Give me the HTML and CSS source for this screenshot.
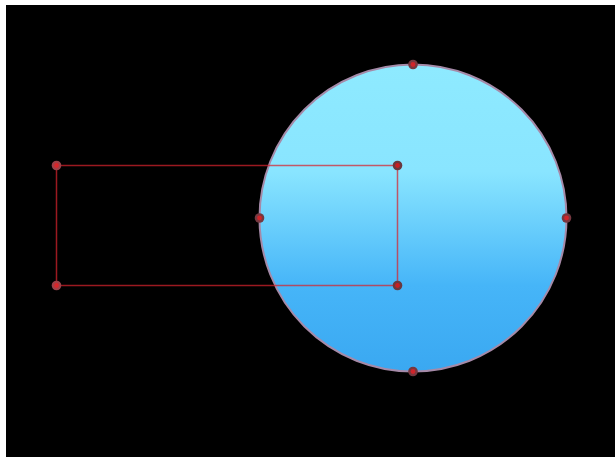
FILE: index.html
```html
<!DOCTYPE html>
<html>
<head>
<meta charset="utf-8">
<link rel="stylesheet" href="styles.css">
</head>
<body>
<div class="stage">
  <svg class="canvas" viewBox="0 0 609 452" width="609" height="452">
    <defs>
      <linearGradient id="fill" x1="0" y1="0" x2="0" y2="1">
        <stop offset="0" stop-color="#8eeaff"/>
        <stop offset="0.35" stop-color="#89e5ff"/>
        <stop offset="0.72" stop-color="#46b5f8"/>
        <stop offset="1" stop-color="#3aa8f1"/>
      </linearGradient>
    </defs>
    <circle cx="407" cy="213" r="153.5" fill="url(#fill)" stroke="#a58aa8" stroke-width="2"/>
    <rect x="50.5" y="160.5" width="341" height="120" fill="none" stroke="rgba(215,35,45,0.72)" stroke-width="1.5"/>
    <g class="handle">
      <circle cx="50.5" cy="160.5" r="4.8" fill="#9c4048"/><circle cx="50.5" cy="160.5" r="2.4" fill="#d8262b"/>
      <circle cx="391.5" cy="160.5" r="4.8" fill="#6a383e"/><circle cx="391.5" cy="160.5" r="2.4" fill="#c81f24"/>
      <circle cx="50.5" cy="280.5" r="4.8" fill="#9c4048"/><circle cx="50.5" cy="280.5" r="2.4" fill="#d8262b"/>
      <circle cx="391.5" cy="280.5" r="4.8" fill="#6a383e"/><circle cx="391.5" cy="280.5" r="2.4" fill="#c81f24"/>
      <circle cx="407" cy="59.5" r="4.8" fill="#763840"/><circle cx="407" cy="59.5" r="2.4" fill="#d0242a"/>
      <circle cx="407" cy="366.5" r="4.8" fill="#763840"/><circle cx="407" cy="366.5" r="2.4" fill="#d0242a"/>
      <circle cx="253.5" cy="213" r="4.8" fill="#763840"/><circle cx="253.5" cy="213" r="2.4" fill="#d0242a"/>
      <circle cx="560.5" cy="213" r="4.8" fill="#763840"/><circle cx="560.5" cy="213" r="2.4" fill="#d0242a"/>
    </g>
  </svg>
</div>
</body>
</html>
```
FILE: styles.css
```css
html, body {
  margin: 0;
  padding: 0;
  background: #ffffff;
  overflow: hidden;
}
.stage {
  margin: 5px 0 0 6px;
  width: 609px;
  height: 452px;
  background: #000000;
}
.canvas {
  display: block;
}
```
